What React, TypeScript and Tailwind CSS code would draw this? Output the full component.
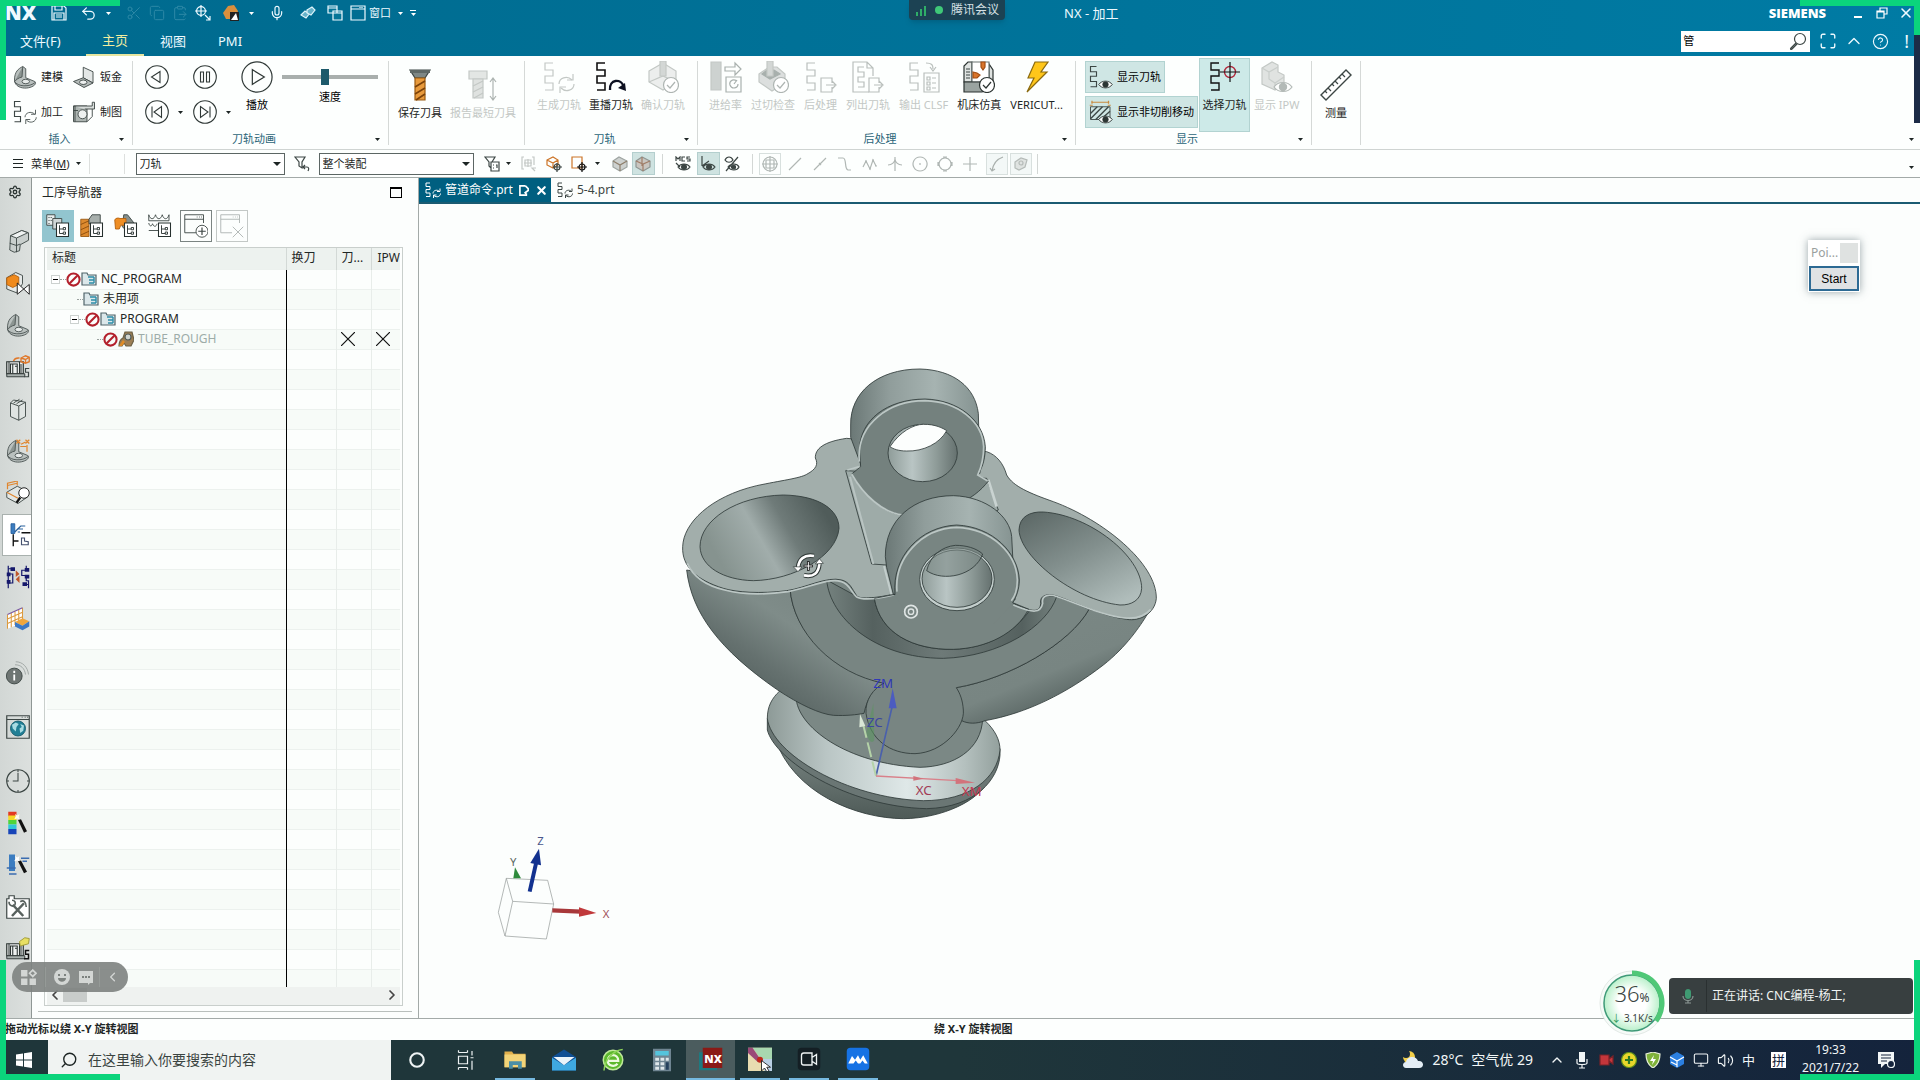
import { ReactNode } from "react";
import { Scissors, Copy, ClipboardPaste, Mic, Undo2, Search, X, ChevronUp, ChevronLeft, ChevronRight, CircleHelp, Settings, Maximize, Monitor, Volume2 } from "lucide-react";

const ink = "#3c4644";
const dim = "#c3c8c5";

type IconProps = { children: ReactNode; box?: number; className?: string };

function Svg({ children, box = 32, className = "size-8" }: IconProps) {
    return (
        <svg viewBox={`0 0 ${box} ${box}`} className={`shrink-0 ${className}`} fill="none" stroke={ink} strokeWidth="1.2" aria-hidden="true">
            {children}
        </svg>
    );
}

function Caret({ className = "text-[#1d2524]" }: { className?: string }) {
    return (
        <svg viewBox="0 0 5 3" className={`h-[3px] w-[5px] shrink-0 ${className}`} aria-hidden="true">
            <path d="M0 0h5L2.5 3z" fill="currentColor" />
        </svg>
    );
}

/* pieces shared by many tool path icons */
const snake = "M10 2H2v7h8v6H2v7h8v7H2";
const eye = (c: string) => (
    <g stroke={c} fill="#fdfefd">
        <path d="M13 26c4-6 14-6 18 0-4 6-14 6-18 0z" />
        <circle cx="22" cy="26" r="3.6" fill={c} />
    </g>
);
const check = (c: string) => (
    <g stroke={c}>
        <circle cx="24" cy="24" r="7.5" fill="#fff" />
        <path d="m20 24 3 3 5-6" fill="none" />
    </g>
);
const cycle = (c: string) => (
    <g stroke={c}>
        <path d="M16 23c0-6 8-9 13-4M31 23c0 6-8 9-13 4" />
        <path d="M30 13v6h-6M17 32v-6h6" />
    </g>
);
const bracket = (
    <g stroke="#4b5452">
        <path d="M2 20C2 9 7 5 13 2l4 3v12l12 5c2 2 1 4-2 6-5 3-13 4-19 1-4-2-6-5-6-9z" fill="#b9c0be" />
        <path d="M13 2l-1 14c-5 1-8 4-10 6" fill="#8c9592" />
        <ellipse cx="17" cy="22" rx="5" ry="3" fill="#e6eae9" />
        <path d="M2 22c4 7 20 8 28 1" />
    </g>
);
const treeBadge = (
    <g stroke="#26302e">
        <path d="M14 12h16v18H14z" fill="#fff" strokeWidth="1.4" />
        <path d="M18 15v11h5M18 20h5" />
        <path d="M23 18h3v3h-3zM23 24h3v3h-3z" />
    </g>
);
const machine = (
    <g stroke="#2b3331">
        <path d="M1 25V9h22v16z" fill="#eef1f0" strokeWidth="1.6" />
        <path d="M6 25V12h9v13M9 12v13M12 15h3M4 9v16M18 9v16M20 12v13" strokeWidth="1.4" />
        <path d="M1 25h24v4H1z" fill="#a9b1ae" />
    </g>
);

const I = {
    model: <Svg className="size-6">{bracket}</Svg>,
    sheet: (
        <Svg className="size-6">
            <path d="m15 3 13 6v15l-13-7z" fill="#e3e7e6" />
            <path d="M15 17 2 22l14 8 12-6z" fill="#b5bcba" />
            <ellipse cx="15" cy="23" rx="5" ry="3" fill="#eef1f0" />
        </Svg>
    ),
    cam: <Svg className="size-6"><path d={snake} strokeWidth="1.5" />{cycle("#4a5351")}</Svg>,
    draft: (
        <Svg className="size-6">
            <path d="M2 8h18v21H2z" fill="#aeb6b3" />
            <path d="M2 8h25V3h3v9H17" fill="#d7dcda" />
            <circle cx="14" cy="19" r="6" fill="#eef1f0" />
            <path d="M20 29l7-7V12" />
            <path d="M2 14h6M4 8v21" />
        </Svg>
    ),
    saveTool: (
        <Svg>
            <path d="M6 1h20l-5 8h-10z" fill="#7e8886" />
            <path d="M6 1h20v3H6z" fill="#5f6967" stroke="none" />
            <path d="M11 9h10v22H11z" fill="#e89a3c" stroke="#9a5a10" />
            <path d="m11 18 10-6M11 25l10-6M12 31l9-6" stroke="#7c4208" strokeWidth="1.6" />
        </Svg>
    ),
    shortTool: (
        <Svg>
            <g stroke={dim}>
                <path d="M2 2h18v8H2z" fill="#e3e6e4" />
                <path d="M6 10h10v19H6z" fill="#dfe2e0" />
                <path d="m6 17 10-5M6 23l10-5M7 29l9-5" />
                <path d="M26 10v20M23 13l3-4 3 4M23 27l3 4 3-4" stroke="#adb4b1" />
            </g>
        </Svg>
    ),
    gen: <Svg><path d={snake} stroke={dim} />{cycle(dim)}</Svg>,
    replay: (
        <Svg>
            <path d={snake} stroke="#111" strokeWidth="1.6" />
            <path d="M15 29c-1-11 11-12 14-3" stroke="#0c1020" strokeWidth="2.4" />
            <path d="M31 30l-8-3 7-5z" fill="#0c1020" stroke="none" />
        </Svg>
    ),
    confirm: (
        <Svg>
            <path d="M2 10 16 2l13 8v10l-13 9L2 21z" fill="#eceeed" stroke={dim} />
            <path d="M2 21l14-6 12 6M16 15v-4" stroke={dim} />
            <path d="M13 0h6v15h-6z" fill="#d3d7d5" stroke={dim} />
            {check("#aeb5b2")}
        </Svg>
    ),
    feed: (
        <Svg>
            <path d="M1 1h10v28H1z" fill="#cdd2d0" stroke={dim} />
            <path d="M15 6h10V2l6 6-6 6v-4H15z" stroke="#a9b1ae" />
            <path d="M16 16h15v15H16z" stroke="#a9b1ae" />
            <path d="M27 20c-5-3-8 1-7 4 2 5 8 3 8-1M24 23l3-4" stroke="#a9b1ae" />
        </Svg>
    ),
    gouge: (
        <Svg>
            <path d="M2 13 12 6h8l8 7v9l-13 8L2 21z" fill="#dcdfde" stroke={dim} />
            <path d="m5 13 8 5 10-5-6-4H10z" fill="#a8b0ad" stroke="#a8b0ad" />
            <path d="M10 0h6v15h-6z" fill="#d3d7d5" stroke={dim} />
            {check("#aeb5b2")}
        </Svg>
    ),
    post: (
        <Svg>
            <path d={snake} stroke="#b9bfbc" />
            <path d="M27 22v-5H16v14h11v-5M21 24h9M27 20l4 4-4 4" stroke="#b9bfbc" />
        </Svg>
    ),
    list: (
        <Svg>
            <path d="M17 31H1V1h14l6 6v8M15 1v6h6" stroke="#b9bfbc" />
            <path d="M12 6H6v5h6v5H6v5h6v5H6" stroke="#b9bfbc" />
            <path d="M27 22v-5H17v14h10v-5M22 24h8M27 20l4 4-4 4" stroke="#b9bfbc" />
        </Svg>
    ),
    clsf: (
        <Svg>
            <path d={snake} stroke="#b9bfbc" />
            <path d="M16 12h15v19H16zM19 16h3v3h-3zM19 21h3v3h-3zM19 26h3v3h-3zM24 17h4M24 22h4M24 27h4M18 2c6 0 7 2 7 6M22 6l3 4 3-4" stroke="#b9bfbc" />
        </Svg>
    ),
    sim: (
        <Svg>
            <path d="M1 21V5l4-4h4v20zM26 21V3l4 6v12z" fill="#dfe3e1" stroke="#2b3331" />
            <path d="M9 1h17v20H9z" fill="#fff" stroke="#6c7573" />
            <path d="M3 8h4M3 11h4M3 14h4M3 17h4" />
            <path d="M1 21h27v6l-9 4H1z" fill="#9aa3a0" stroke="#2b3331" />
            <path d="M18 1h4v5l-2 3-2-3zM10 11l4 1 3 2-3 3h-4z" fill="#d9742b" stroke="#a24d12" />
            {check("#2b3331")}
        </Svg>
    ),
    bolt: (
        <Svg>
            <path d="M14 1h13l-7 10h6L6 31l7-14H7z" fill="#ffc61a" stroke="#8a6a10" />
        </Svg>
    ),
    showPath: <Svg className="size-6"><path d={snake} strokeWidth="1.5" />{eye("#2c3634")}</Svg>,
    showMove: (
        <Svg className="size-6">
            <path d="M2 9h26v17H2z" />
            <path d="m2 18 9-9M2 25 18 9M9 26 26 9M18 24l10-9" strokeWidth="1.8" />
            <path d="M3 3h24M4 1v4M26 1v4M1 7h4M25 7h4" stroke="#c98a3e" strokeWidth="1.6" />
            {eye("#2c3634")}
        </Svg>
    ),
    pick: (
        <Svg>
            <path d={snake} stroke="#111" strokeWidth="1.4" />
            <circle cx="21" cy="11" r="5.5" stroke="#b0283c" strokeWidth="1.4" />
            <path d="M21 1v20M11 11h20" stroke="#111" strokeWidth="1.2" />
        </Svg>
    ),
    ipw: (
        <Svg>
            <path d="M1 7 11 1l6 3v7l6 3v8l-9 7L1 23z" fill="#e0e3e1" stroke={dim} />
            <path d="M1 7l7 4 9-5M8 11v7l6 4 9-6M14 22v6" stroke="#c9cecb" />
            {eye("#b3bab7")}
        </Svg>
    ),
    ruler: (
        <Svg>
            <path d="M1 26 26 1l5 5L6 31z" fill="#fff" strokeWidth="1.4" />
            <path d="m5 22 2 2M8 19l3 3M12 15l2 2M15 12l3 3M19 8l2 2M22 5l3 3" />
        </Svg>
    ),
};

function BigButton({ icon, label, off = false, low = false }: { icon: ReactNode; label: string; off?: boolean; low?: boolean }) {
    return (
        <button type="button" disabled={off} className={`flex flex-col items-center gap-1 whitespace-nowrap px-1 ${low ? "pt-2" : ""} ${off ? "text-[#c3c8c5]" : "text-[#1c2423]"}`}>
            {icon}
            <span className="text-[11px] leading-4">{label}</span>
        </button>
    );
}

function SmallButton({ icon, label }: { icon: ReactNode; label: string }) {
    return (
        <button type="button" className="flex h-8 items-center gap-1 whitespace-nowrap text-[11px] leading-4 text-[#1c2423]">
            {icon}
            {label}
        </button>
    );
}

function Group({ width, label, children }: { width: string; label?: string; children: ReactNode }) {
    return (
        <section className={`flex h-[84px] shrink-0 flex-col border-r border-[#d5d9d7] ${width}`}>
            <div className="h-[72px]">{children}</div>
            {label && (
                <div className="flex h-3 items-center text-[11px] leading-3 text-[#2a6478]">
                    <span className="flex-1 text-center">{label}</span>
                    <span className="mr-2"><Caret /></span>
                </div>
            )}
        </section>
    );
}

function RoundButton({ name, d, big = false }: { name: string; d: string; big?: boolean }) {
    return (
        <button type="button" aria-label={name} className={big ? "size-8" : "size-6"}>
            <svg viewBox="0 0 24 24" className="size-full" fill="none" stroke="#2f3836" strokeWidth={big ? "0.9" : "1.1"}>
                <circle cx="12" cy="12" r="11.3" />
                <path d={d} />
            </svg>
        </button>
    );
}

function TitleBar() {
    return (
        <header className="h-14 shrink-0 bg-linear-to-r from-[#006a8e] to-[#007ba4] text-[#eefaff]">
            <div className="flex h-[26px] items-center">
                <div className="flex flex-1 items-center">
                    <span className="ml-[5px] w-8 font-['Open_Sans','Noto_Sans',sans-serif] text-[20px] leading-6 font-extrabold">NX</span>
                    <div className="ml-[14px] flex items-center gap-[7px]">
                        <Svg box={16} className="size-4"><path d="M1 1h12l2 2v12H1zM4 1v4h7V1M3 15V8h10v7M5 10h6M5 12h6" stroke="#eefaff" /></Svg>
                        <Undo2 className="ml-[6px] size-[17px]" strokeWidth={1.8} />
                        <Caret className="ml-[2px] text-white" />
                        <Scissors className="ml-2 size-4 text-[#2c88a6]" strokeWidth={1.5} />
                        <Copy className="size-4 text-[#2c88a6]" strokeWidth={1.5} />
                        <ClipboardPaste className="size-4 text-[#2c88a6]" strokeWidth={1.5} />
                        <Svg box={16} className="size-4"><path d="M6 0v12M0 6h12M10 10l5 5M15 11v4h-4" stroke="#eefaff" /><circle cx="6" cy="6" r="4.4" stroke="#eefaff" /></Svg>
                        <Svg box={16} className="ml-[5px] size-4"><path d="m0 8 5-7 6-1 4 6-3 8H3z" fill="#d98f3d" stroke="none" /><path d="M7 7h9v9H7z" fill="#222" stroke="none" /><path d="m8 15 5-7 2 7z" fill="#fff" stroke="none" /></Svg>
                        <Caret className="ml-[3px] text-white" />
                        <Mic className="ml-2 size-4" strokeWidth={1.8} />
                        <Svg box={16} className="ml-2 size-4"><path d="m1 10 4-4 4 3-3 4zM7 5l5-3 3 3-4 5-4-2z" fill="#66b2c9" stroke="#dff4fa" /></Svg>
                        <Svg box={16} className="ml-1 size-4"><path d="M1 1h9v7H1zM1 3h9M6 6h9v9H6zM6 8h9" stroke="#eefaff" fill="#057597" /></Svg>
                        <Svg box={16} className="size-4"><path d="M1 1h14v14H1zM1 4h14M10 2v1M12 2v1" stroke="#eefaff" /></Svg>
                        <span className="-ml-1 text-[11px] leading-4">窗口</span>
                        <Caret className="text-white" />
                        <span className="flex flex-col items-center gap-[2px]"><i className="h-px w-[6px] bg-white" /><Caret className="text-white" /></span>
                    </div>
                </div>
                <div className="flex h-5 items-center gap-2 self-start rounded-b bg-[#1c4253] px-[6px] text-[12px] leading-4 text-[#d6e0e4] shadow-md">
                    <Svg box={12} className="size-3"><path d="M1 12V8h2v4zM5 12V5h2v7zM9 12V2h2v10z" fill="#2fae68" stroke="none" /></Svg>
                    <i className="size-2 rounded-full bg-[#3fc878]" />
                    腾讯会议
                </div>
                <div className="flex flex-1 items-center pr-[6px]">
                    <h1 className="mr-auto ml-[59px] text-[13px] leading-5">NX - 加工</h1>
                    <span className="mr-7 font-['Open_Sans','Noto_Sans',sans-serif] text-[13px] leading-5 font-extrabold text-white">SIEMENS</span>
                    <button type="button" aria-label="最小化" className="mt-2 mr-[14px] h-[2px] w-2 bg-white" />
                    <button type="button" aria-label="还原" className="mr-[10px]"><Svg box={12} className="size-3"><path d="M4 4V1h7v6H8M1 4h7v7H1zM1 5h7" stroke="#fff" /></Svg></button>
                    <button type="button" aria-label="关闭"><X className="size-4" strokeWidth={2.4} /></button>
                </div>
            </div>
            <nav className="flex h-[30px] items-center text-[13px] leading-5">
                <a href="#file" className="ml-5 w-[66px]">文件(F)</a>
                <a href="#home" className="flex h-[29px] w-[58px] flex-col items-center justify-end border-b-2 border-[#e6e6a0] pb-1 text-[#f2eda0]">主页</a>
                <a href="#view" className="ml-4 w-[58px]">视图</a>
                <a href="#pmi">PMI</a>
                <div className="ml-auto flex items-center pr-[11px]">
                    <div className="flex h-[21px] w-[129px] items-center bg-white">
                        <input aria-label="查找命令" defaultValue="管" className="w-[108px] px-[2px] text-[11px] leading-4 text-black outline-none" />
                        <Svg box={18} className="size-[18px]"><circle cx="11" cy="7" r="5.5" /><path d="m7 11-5 5c-1 1 0 2 1 1l5-5" /></Svg>
                    </div>
                    <Maximize className="ml-[9px] size-[18px]" strokeWidth={1.8} />
                    <ChevronUp className="ml-[7px] size-5" strokeWidth={1.6} />
                    <CircleHelp className="ml-2 size-[17px]" strokeWidth={1.6} />
                    <span className="ml-[15px] text-[18px] leading-5">!</span>
                </div>
            </nav>
        </header>
    );
}

function Ribbon() {
    return (
        <div className="flex h-[94px] shrink-0 items-start border-b border-[#cfd4d2] bg-[#fdfffe] pt-[5px]">
            <Group width="w-[133px]" label="插入">
                <div className="grid grid-cols-[59px_1fr] gap-y-[3px] pl-[13px]">
                    <SmallButton icon={I.model} label="建模" />
                    <SmallButton icon={I.sheet} label="钣金" />
                    <SmallButton icon={I.cam} label="加工" />
                    <SmallButton icon={I.draft} label="制图" />
                </div>
            </Group>
            <Group width="w-[256px]" label="刀轨动画">
                <div className="flex pl-3">
                    <div className="grid grid-cols-[48px_48px] gap-y-[3px]">
                        <div className="flex h-8 items-center"><RoundButton name="反向播放" d="M15 6.5v11L6.5 12z" /></div>
                        <div className="flex h-8 items-center"><RoundButton name="暂停" d="M7.5 7h3v10h-3zM13.5 7h3v10h-3z" /></div>
                        <div className="flex h-8 items-center gap-[9px]"><RoundButton name="上一步" d="M16.5 6.5v11L9 12zM7 6.5v11" /><Caret /></div>
                        <div className="flex h-8 items-center gap-[9px]"><RoundButton name="下一步" d="M7.5 6.5v11L15 12zM17 6.5v11" /><Caret /></div>
                    </div>
                    <div className="flex flex-col items-center gap-1 text-[11px] leading-4">
                        <RoundButton big name="播放" d="M8.5 6.500v11l9-5.500z" />
                        播放
                    </div>
                    <label className="ml-[9px] flex w-24 flex-col items-center gap-1 pt-2 text-[11px] leading-4">
                        <input type="range" defaultValue={44} className="h-4 w-24 appearance-none bg-transparent [&::-webkit-slider-runnable-track]:h-4 [&::-webkit-slider-runnable-track]:bg-[linear-gradient(#a9afad,#a9afad)] [&::-webkit-slider-runnable-track]:bg-[length:100%_4px] [&::-webkit-slider-runnable-track]:bg-center [&::-webkit-slider-runnable-track]:bg-no-repeat [&::-webkit-slider-thumb]:h-4 [&::-webkit-slider-thumb]:w-2 [&::-webkit-slider-thumb]:appearance-none [&::-webkit-slider-thumb]:bg-[#1d5a6b]" />
                        速度
                    </label>
                </div>
            </Group>
            <Group width="w-[136px]">
                <div className="flex pl-[5px]">
                    <BigButton low icon={I.saveTool} label="保存刀具" />
                    <BigButton low off icon={I.shortTool} label="报告最短刀具" />
                </div>
            </Group>
            <Group width="w-[173px]" label="刀轨">
                <div className="flex pl-2">
                    <BigButton off icon={I.gen} label="生成刀轨" />
                    <BigButton icon={I.replay} label="重播刀轨" />
                    <BigButton off icon={I.confirm} label="确认刀轨" />
                </div>
            </Group>
            <Group width="w-[378px]" label="后处理">
                <div className="flex gap-px pl-[7px]">
                    <BigButton off icon={I.feed} label="进给率" />
                    <BigButton off icon={I.gouge} label="过切检查" />
                    <BigButton off icon={I.post} label="后处理" />
                    <BigButton off icon={I.list} label="列出刀轨" />
                    <BigButton off icon={I.clsf} label="输出 CLSF" />
                    <BigButton icon={I.sim} label="机床仿真" />
                    <BigButton icon={I.bolt} label="VERICUT..." />
                </div>
            </Group>
            <Group width="w-[236px]" label="显示">
                <div className="flex pl-[9px]">
                    <div className="flex w-28 flex-col items-start gap-[3px]">
                        <button type="button" className="flex h-8 items-center gap-1 border border-[#b2d3d1] bg-[#cfe6e4] px-[3px] text-[11px] leading-4 whitespace-nowrap">{I.showPath}显示刀轨</button>
                        <button type="button" className="flex h-8 items-center gap-1 border border-[#b2d3d1] bg-[#cfe6e4] px-[3px] text-[11px] leading-4 whitespace-nowrap">{I.showMove}显示非切削移动</button>
                    </div>
                    <div className="-mt-[3px] ml-[2px] flex h-[74px] w-[51px] justify-center border border-[#b2d3d1] bg-[#cdeae8] pt-[2px]">
                        <BigButton icon={I.pick} label="选择刀轨" />
                    </div>
                    <BigButton off icon={I.ipw} label="显示 IPW" />
                </div>
            </Group>
            <Group width="w-[49px]">
                <div className="flex justify-center"><BigButton low icon={I.ruler} label="测量" /></div>
            </Group>
            <div className="flex h-[84px] flex-1 items-end justify-end pr-[6px] pb-1"><Caret /></div>
        </div>
    );
}

function Picker({ label, value, width }: { label: string; value: string; width: string }) {
    return (
        <div className={`relative flex h-[22px] shrink-0 items-center ${width}`}>
            <select aria-label={label} className="h-full w-full appearance-none border border-[#5c6664] bg-white px-[3px] text-[11px] leading-4">
                <option>{value}</option>
            </select>
            <svg viewBox="0 0 8 4" className="pointer-events-none absolute right-1 h-1 w-2"><path d="M0 0h8L4 4z" fill="#1d2524" /></svg>
        </div>
    );
}

const snaps = [
    "M2 14 13 3M12 4l2-2",
    "M2 14 14 2M7 7l2 2",
    "M1 2h5c4 0 1 11 5 12h3",
    "M1 11l3-6 4 8 3-9 3 6M3 5h2M7 13h2M10 4h2M13 10h2",
    "M8 1v14M1 9c4 0 7-3 7-6 0 3 3 6 7 6",
    "M8 1a7 7 0 1 0 .1 0zM8 7v2",
    "M8 2a6 6 0 1 0 .1 0zM6 1h4M6 15h4M1 6v4M15 6v4",
    "M8 1v14M1 8h14",
];

function SelectionBar() {
    return (
        <div className="flex h-7 shrink-0 items-center border-b border-[#a3aaa8] bg-[#fdfffe] text-[11px] leading-4 text-[#1c2423]">
            <button type="button" className="ml-[13px] flex items-center">
                <span className="mr-2 flex w-[10px] flex-col gap-[3px]"><i className="h-px bg-[#1c2423]" /><i className="h-px bg-[#1c2423]" /><i className="h-px bg-[#1c2423]" /></span>
                菜单(<u>M</u>)
                <span className="ml-[6px]"><Caret /></span>
            </button>
            <i className="ml-2 h-5 w-px bg-[#dde0de]" />
            <i className="ml-[34px] h-5 w-px bg-[#dde0de]" />
            <span className="w-[11px]" />
            <Picker label="类型过滤器" value="刀轨" width="w-[149px]" />
            <Svg box={16} className="mx-[9px] size-4"><path d="M1 1h10L8 6v6l-3-2V6zM9 11h4c2 0 2 2 1 4M11 9l-2 2 2 2" /></Svg>
            <Picker label="选择范围" value="整个装配" width="w-[155px]" />
            <Svg box={16} className="ml-[10px] size-4"><path d="M1 1h10L8 6H7v6L5 10V6zM7 6h8v9H7zM9 9h1M9 12h1M12 9h1v3" /></Svg>
            <span className="ml-[6px]"><Caret /></span>
            <Svg box={16} className="ml-[10px] size-4"><path d="M3 1H1v12h2M11 1h2v8M7 3v8M3 7h8M4 4h6v6H4zM14 15l-3-3h4" stroke={dim} /></Svg>
            <Svg box={16} className="ml-[9px] size-4"><path d="m1 4 6-3 5 3v5l-5 3-6-3zM1 4l6 3 5-3M7 7v5" stroke="#cc7427" /><path d="M11 7v9M7 11h9" /><circle cx="11" cy="11" r="3" /></Svg>
            <Svg box={16} className="ml-[9px] size-4"><path d="M1 1h10v11H1z" stroke="#cc7427" /><path d="M11 6v10M6 11h10" stroke="#111" /><circle cx="11" cy="11" r="3" stroke="#111" /></Svg>
            <span className="ml-2"><Caret /></span>
            <Svg box={16} className="ml-3 size-4"><path d="m1 5 6-4 8 4v6l-7 4-7-4z" fill="#cdd1cf" stroke="#9da4a1" /><path d="m1 5 7 4 7-4M8 9v6" stroke="#8e7f6c" /></Svg>
            <button type="button" aria-label="着色" className="ml-1 flex size-[23px] items-center justify-center border border-[#b4cfce] bg-[#cfe3e1]"><Svg box={16} className="size-4"><path d="m1 5 6-4 8 4v6l-7 4-7-4z" fill="#c9c6c0" stroke="#8f9693" /><path d="m1 5 7 3 7-3M8 8v7M7 1v9" stroke="#a07e68" /></Svg></button>
            <i className="ml-[7px] h-5 w-px bg-[#d3d7d5]" />
            <Svg box={16} className="ml-3 size-4"><path d="M1 5V1l2 2 2-2v4M10 1H7v4h3M15 1h-3v2h3v2h-3M1 7l4 4" /><path d="M3 11c3-4 9-4 12 0-3 4-9 4-12 0z" /><circle cx="9" cy="11" r="2.4" fill={ink} /></Svg>
            <button type="button" aria-label="显示坐标系" className="ml-[6px] flex size-[23px] items-center justify-center border border-[#b4cfce] bg-[#cfe3e1]"><Svg box={16} className="size-4"><path d="M2 0v10M2 10l7-5M3 11c3-4 9-4 12 0-3 4-9 4-12 0z" /><circle cx="9" cy="11" r="2.4" fill={ink} /></Svg></button>
            <Svg box={16} className="ml-1 size-4"><path d="M1 4c2-4 6-4 8 0-2 3-6 3-8 0zM4 11c3-4 9-4 11 0-2 4-8 4-11 0zM14 1 2 15" /><circle cx="9.5" cy="11" r="2" fill={ink} /></Svg>
            <i className="ml-3 h-5 w-px bg-[#d3d7d5]" />
            <span className="ml-[6px] flex size-[22px] items-center justify-center border border-[#d8e0de]"><Svg box={16} className="size-4"><path d="M8 0v16M0 8h16M4 4h8v8H4z" stroke="#b0b7b4" /><circle cx="8" cy="8" r="7" stroke="#b0b7b4" /></Svg></span>
            <span className="mr-2 ml-[6px] flex gap-[9px]">
                {snaps.map((d) => <Svg key={d} box={16} className="size-4"><path d={d} stroke="#b0b7b4" /></Svg>)}
            </span>
            <span className="flex size-[22px] items-center justify-center border border-[#d8e0de] bg-[#f3f8f7]"><Svg box={16} className="size-4"><path d="M14 1C8 3 4 8 3 15M1 12l2 3 3-2" stroke="#a9b0ad" /></Svg></span>
            <span className="ml-[2px] flex size-[22px] items-center justify-center border border-[#d8e0de] bg-[#f3f8f7]"><Svg box={16} className="size-4"><path d="m2 6 6-4 6 2-2 7-6 3-4-2z" fill="#dfe3e1" stroke="#b5bbb8" /><circle cx="8" cy="7" r="2" stroke="#b5bbb8" /></Svg></span>
            <i className="ml-[5px] h-5 w-px bg-[#d3d7d5]" />
            <span className="mt-[7px] mr-[6px] ml-auto"><Caret /></span>
        </div>
    );
}

const sideItems: { name: string; gap?: boolean; on?: boolean; art: ReactNode }[] = [
    { name: "装配导航器", art: <g><path d="m6 9 15-7 9 3v10l-11 6-1 8-7 2-6-3z" fill="#c9cfcd" /><path d="m6 9 8 3 15-7-8-3z" fill="#f0f3f2" /><path d="M14 12v19M5 19l9 3 5-2" /></g> },
    { name: "约束导航器", art: <g><path d="m1 9 12-7 9 4v11l-8 12-13-5z" fill="#e6e9e8" /><path d="m1 9 10-4 6 3v10l-8 4-8-4z" fill="#f08a1d" stroke="#b3600c" /><path d="M15 16v15l16-13v13z" fill="#fff" stroke="#111" /></g> },
    { name: "部件导航器", art: bracket },
    { name: "机床导航器", art: <g>{machine}<path d="M10 8c2-5 5-4 8-4M20 4l6-3 5 2v6l-5 2-6-2zM20 4l6 2 5-3M26 6v5" stroke="#e0782a" strokeWidth="1.8" /><path d="M31 18h-5v5h4v6h-6" strokeWidth="1.6" /></g> },
    { name: "重用库", art: <path d="m6 8 4-4 16 3v19l-9 5L6 26zM6 8l11 4v19M17 12l9-5M10 8l8-5M14 9l8-5" fill="#dfe4e2" /> },
    { name: "刀具库", art: <g>{bracket}<path d="m14 1 5 5M19 1l-5 5M20 7l6-3M26 1l5 5M31 1l-5 5M28 8v9M19 10h8" stroke="#e0862f" strokeWidth="1.6" /></g> },
    { name: "测量导航器", art: <g><path d="m1 15 14-8 14 7v7l-13 9-15-8z" fill="#e3e7e5" /><path d="M1 15l15 8M2 11V3l13-3v6M2 6l13-3" stroke="#e0862f" strokeWidth="1.6" /><circle cx="24" cy="16" r="7" fill="#fff" stroke="#111" /><path d="m19 22-5 7" stroke="#111" strokeWidth="3" /></g> },
    { name: "工序导航器", on: true, art: <g><path d="M4 1h5v13H4z" fill="#3b7cc0" stroke="#28609c" /><path d="M9 12 17 4h6M12 8h8M13 12h3" stroke="#28609c" strokeWidth="1.6" /><path d="M7 15v16M7 24h7M18 13h12" stroke="#111" strokeWidth="1.8" /><path d="M18 20h4v4l5 1v4h-9z" stroke="#44506e" strokeWidth="1.5" /></g> },
    { name: "特征列表", art: <g><path d="M3 1v30M9 5H3M3 12h6v12H3M27 1v6h-6v7h6v7h3v10M25 26h5" stroke="#15186b" strokeWidth="1.6" /><path d="M6 3h6v5H6zM1 10h5v5H1zM1 20h5v5H1zM25 4h6v5h-6zM25 13h6v5h-6zM22 23h6v5h-6z" fill="#15186b" stroke="none" /><path d="m13 7 5 5-5 4zM18 14v10l-5-5z" fill="#c0562b" stroke="none" /></g> },
    { name: "加工特征", art: <g><path d="M2 10 22 1v20L2 29z" fill="#fff" stroke="none" /><path d="M2 10v19M2 16l20-9M2 22l20-9M7 8v19M12 6v18M17 4v18M22 1v16" stroke="#dc9a3e" strokeWidth="1.4" /><path d="M2 10 22 1" stroke="#7a5aa0" strokeWidth="1.8" /><path d="m12 20 10-5 9 4-9 6z" fill="#f0a63c" stroke="none" /><path d="m12 20 10 5v6l-10-5zM22 25l9-6v7l-9 5z" fill="#3c78c4" stroke="none" /></g> },
    { name: "信息", gap: true, art: <g><circle cx="11" cy="20" r="10.5" fill="#6e7573" /><path d="M11 18v8M11 13v3" stroke="#fff" strokeWidth="2.4" /><path d="M12 5c8 0 13 5 14 13M13 1c9 0 16 7 17 17" stroke="#9da4a1" /></g> },
    { name: "网页浏览器", gap: true, art: <g><path d="M1 1h30v30H1zM1 6h30M21 3h1M25 3h1M28 3h1" strokeWidth="1.6" /><circle cx="16" cy="18" r="10" fill="#217f95" stroke="#155a6c" /><path d="m8 13 5-3 4 2-3 4-1 6-4-4zM19 12l5 2-1 7-4 3-1-6 3-2z" fill="#a8dbe2" stroke="none" /></g> },
    { name: "历史记录", gap: true, art: <g><circle cx="16" cy="16" r="15" strokeWidth="1.6" /><path d="M16 5v11H9M16 1v3M16 28v3M1 16h3M28 16h3" strokeWidth="1.4" /></g> },
    { name: "角色", art: <g stroke="none"><path d="M3 1h11v6H3z" fill="#e33a22" /><path d="M3 6h11v6H3z" fill="#f5d928" /><path d="M3 12h11v6H3z" fill="#4fd43a" /><path d="M3 18h11v6H3z" fill="#30c7d8" /><path d="M3 24h11v7H3z" fill="#1744b8" /><path d="m16 12 4-1 8 16-4 2z" fill="#111" /><path d="m12 4 3 2 3-2-1 4 1 3-3-1-4 1 2-4z" fill="#fffdf0" /></g> },
    { name: "加工向导", art: <g><path d="M4 2h8v22H4z" fill="#3b7cc0" stroke="none" /><path d="M1 20h12M20 7h11M22 11h6M4 28h10" stroke="#3b6cb0" strokeWidth="2" /><path d="m16 11 4-1 8 15-4 2z" fill="#111" stroke="none" /><path d="m12 4 3 2 3-2-1 4 1 3-3-1-4 1 2-4z" fill="#fff" stroke="none" /></g> },
    { name: "工具", art: <g><path d="M1 31V5h3V1h7v4h20v26z" fill="#fff" strokeWidth="1.6" /><path d="m8 28 16-17M9 13l14 15" stroke="#59625f" strokeWidth="3.4" /><path d="M19 9c4-3 8 0 8 7M4 9c0 6 6 7 8 4M8 7c4 0 5 3 4 6" stroke="#59625f" strokeWidth="2.2" /></g> },
    { name: "机床文件", art: <g>{machine}<path d="M31 18h-5v5h4v6h-6" strokeWidth="2" stroke="#111" /><path d="m18 6 7-5 6 1-1 7-11 3z" fill="#e8df63" stroke="#9c9632" /></g> },
];

function SideStrip() {
    return (
        <nav className="w-8 shrink-0 overflow-hidden border-r border-[#8f9795] bg-linear-to-r from-[#d2d7d5] to-[#dce0de]">
            <button type="button" aria-label="设置" className="mb-[15px] flex h-[27px] w-[30px] items-center justify-center">
                <Settings className="size-[14px] text-[#2c3533]" strokeWidth={2.2} />
            </button>
            {sideItems.map((s) => (
                <button key={s.name} type="button" aria-label={s.name} className={`flex h-[42px] w-full items-center justify-end pr-px ${s.gap ? "mt-3" : ""} ${s.on ? "ml-[2px] border border-r-0 border-[#a9b1ae] bg-white pr-[3px]" : ""}`}>
                    <Svg className="size-6">{s.art}</Svg>
                </button>
            ))}
        </nav>
    );
}

const noEntry = <Svg box={16} className="size-[15px]"><circle cx="8" cy="8" r="6.5" stroke="#b3202c" strokeWidth="2.2" /><path d="m12 4-8 8" stroke="#b3202c" strokeWidth="2.2" /></Svg>;
const folder = <Svg box={16} className="size-4"><path d="M1 14V2h5l1 2h8v10z" fill="#dbe7ea" stroke="#50646a" /><path d="M7 6h6M8 9h5M8 12h5M13 6v6" stroke="#2e8da8" strokeWidth="1.4" /></Svg>;
const rough = <Svg box={16} className="size-4"><path d="M1 15c0-4 2-7 4-8l2-6h7l2 8-3 6H8l-2-3-2 3z" fill="#9c7f55" stroke="#6b6045" /><circle cx="10" cy="6" r="3" fill="#cfd4cf" stroke="#4f5a57" /><path d="m1 15 4-6 2 2-3 4z" fill="#e08c25" stroke="none" /></Svg>;
const minus = <span className="flex size-[9px] shrink-0 items-center justify-center border border-[#ccd1cf] bg-white"><i className="h-px w-[5px] bg-black" /></span>;
const dash = <i className="w-[6px] shrink-0 border-t border-dotted border-[#9aa19f]" />;

const treeRows: { pad: string; open?: boolean; blocked?: boolean; icon: ReactNode; text: string; off?: boolean }[] = [
    { pad: "pl-1", open: true, blocked: true, icon: folder, text: "NC_PROGRAM" },
    { pad: "pl-[30px]", icon: folder, text: "未用项" },
    { pad: "pl-[23px]", open: true, blocked: true, icon: folder, text: "PROGRAM" },
    { pad: "pl-[50px]", blocked: true, icon: rough, text: "TUBE_ROUGH", off: true },
];

const cross = <Svg box={14} className="ml-1 size-[14px]"><path d="m0 0 14 14M14 0 0 14" stroke="#111" /></Svg>;

function Navigator() {
    const tools = [
        { name: "程序顺序视图", art: <g><path d="M1 1h11v14H1z" fill="#e6ecec" /><path d="M9 6h12v14H9z" fill="#cfd6d6" /><path d="M4 4v1M7 4v1M4 8v1M7 8v1M4 12v1" strokeWidth="1.8" /></g> },
        { name: "机床视图", art: <g><path d="M1 7h11v23H1z" fill="#dd8a2e" stroke="#9c5a12" /><path d="m1 14 11-5M1 21l11-5M1 28l11-5" stroke="#8a4c0c" /><path d="M16 1h11v12H12V7z" fill="#a7afac" /></g> },
        { name: "几何视图", art: <g><path d="M13 1h5l11 14-9 10-9-8z" fill="#87908d" /><path d="M1 8c1-3 5-3 7-2h8v9H9l-2 5H2z" fill="#ee8e25" stroke="#b4610d" /></g> },
        { name: "加工方法视图", art: <path d="M1 1c2 7 7 7 9 0 2 7 7 7 9 0 2 7 7 7 9 0v8H1zM1 12c1 5 4 5 5 1 2 5 5 4 6 0M1 22h13" /> },
    ];
    return (
        <section className="flex w-[387px] shrink-0 flex-col border-r border-[#a3aaa8] bg-[#fcfefd] text-[#1f2726]">
            <div className="flex h-[29px] items-center justify-between pr-4 pl-[10px]">
                <h2 className="text-[12px] leading-4">工序导航器</h2>
                <button type="button" aria-label="最大化" className="h-[11px] w-3 border border-t-2 border-black" />
            </div>
            <div className="mt-[3px] flex h-8 gap-[2px] pl-[10px]">
                {tools.map((t, i) => (
                    <button key={t.name} type="button" aria-label={t.name} className={`flex size-8 items-center justify-center ${i === 0 ? "bg-[#92c5cf]" : ""}`}>
                        <Svg className="size-6">{t.art}{treeBadge}</Svg>
                    </button>
                ))}
                <button type="button" aria-label="创建" className="ml-[2px] flex size-8 items-center justify-center border border-[#7b8482]"><Svg className="size-6"><path d="M16 25H1V1h25v11M1 7h25M17 4h1M20 4h1M23 4h1" /><circle cx="24" cy="23" r="8" fill="#fff" /><path d="M24 18v10M19 23h10" strokeWidth="1.6" /></Svg></button>
                <button type="button" disabled aria-label="删除" className="ml-[2px] flex size-8 items-center justify-center border border-[#c3c8c6]"><Svg className="size-6"><path d="M16 25H1V1h25v11M1 7h25M17 4h1M20 4h1M23 4h1M17 17l14 14M31 17 17 31" stroke="#adb3b1" /></Svg></button>
            </div>
            <div className="mt-[5px] mr-[15px] ml-3 flex min-h-0 flex-1 flex-col border border-[#c9cfcc] px-[2px]">
                <div className="min-h-0 flex-1 overflow-hidden">
                    <table className="w-full table-fixed border-collapse text-[12px] leading-4">
                        <colgroup><col className="w-[239px]" /><col className="w-[50px]" /><col className="w-[35px]" /><col /></colgroup>
                        <thead>
                            <tr className="h-[21px] bg-[#edf2ef] text-left">
                                <th className="border-r border-[#d3d9d6] p-0 pl-[5px] font-normal">标题</th>
                                <th className="border-r border-[#d3d9d6] p-0 pl-[5px] font-normal">换刀</th>
                                <th className="border-r border-[#d3d9d6] p-0 pl-[5px] font-normal">刀...</th>
                                <th className="p-0 pl-[6px] font-normal">IPW</th>
                            </tr>
                        </thead>
                        <tbody>
                            {Array.from({ length: 36 }, (_, i) => {
                                const r = treeRows[i];
                                return (
                                    <tr key={i} className="h-5 border-t border-[#ecf1ee] even:bg-[#f7fbf8]">
                                        <td className="border-r border-r-black p-0">
                                            {r && (
                                                <div className={`flex h-[19px] items-center ${r.pad}`}>
                                                    {r.open && minus}
                                                    {dash}
                                                    {r.blocked && noEntry}
                                                    {r.icon}
                                                    <span className={`ml-1 ${r.off ? "text-[#9daca8]" : ""}`}>{r.text}</span>
                                                </div>
                                            )}
                                        </td>
                                        <td className="border-r border-[#e8edea] p-0" />
                                        <td className="border-r border-[#e8edea] p-0">{i === 3 && cross}</td>
                                        <td className="p-0">{i === 3 && cross}</td>
                                    </tr>
                                );
                            })}
                        </tbody>
                    </table>
                </div>
                <div className="flex h-[18px] shrink-0 items-center bg-[#eff2f0] pb-[2px]">
                    <ChevronLeft className="size-4 text-[#444]" strokeWidth={2.6} />
                    <i className="h-[14px] w-6 bg-[#c8ccca]" />
                    <ChevronRight className="ml-auto size-4 text-[#444]" strokeWidth={2.6} />
                </div>
            </div>
            <div className="mx-[6px] mt-[5px] mb-[6px] h-px bg-[#b9bfbc]" />
        </section>
    );
}

function PipeModel() {
    const edge = { stroke: "#2f3a38", strokeWidth: 2.5 };
    return (
        <svg viewBox="0 0 1560 1440" className="absolute top-[172px] left-[241px] h-[480px] w-[520px]" fill="none" aria-label="管道模型">
            <defs>
                <linearGradient id="leftPipe" x1="0.15" y1="0.8" x2="0.7" y2="0.2"><stop offset="0" stopColor="#505c5a" /><stop offset="0.35" stopColor="#65716f" /><stop offset="0.7" stopColor="#7f8c89" /><stop offset="1" stopColor="#798683" /></linearGradient>
                <linearGradient id="rightPipe" x1="0.3" y1="0.2" x2="0.75" y2="0.85"><stop offset="0" stopColor="#7a8784" /><stop offset="0.5" stopColor="#788582" /><stop offset="1" stopColor="#4d5957" /></linearGradient>
                <linearGradient id="flange"><stop offset="0" stopColor="#8d9a97" /><stop offset="0.25" stopColor="#b9c5c4" /><stop offset="0.6" stopColor="#dfe8e8" /><stop offset="0.85" stopColor="#b4c0be" /><stop offset="1" stopColor="#93a09d" /></linearGradient>
                <linearGradient id="dome" x1="0" y1="0" x2="0" y2="1"><stop offset="0" stopColor="#7d8986" /><stop offset="1" stopColor="#4e5a57" /></linearGradient>
                <linearGradient id="cyl"><stop offset="0" stopColor="#6b7876" /><stop offset="0.3" stopColor="#909d9b" /><stop offset="0.65" stopColor="#a6b3b1" /><stop offset="1" stopColor="#849290" /></linearGradient>
                <linearGradient id="bore"><stop offset="0" stopColor="#8f9c99" /><stop offset="0.35" stopColor="#b9c5c4" /><stop offset="0.7" stopColor="#8e9b98" /><stop offset="1" stopColor="#65716f" /></linearGradient>
                <linearGradient id="holeL" x1="0.1" y1="0.65" x2="0.95" y2="0.35"><stop offset="0" stopColor="#86938f" /><stop offset="0.4" stopColor="#a1adab" /><stop offset="0.65" stopColor="#6f7b79" /><stop offset="1" stopColor="#505c5a" /></linearGradient>
                <linearGradient id="holeR" x1="0.1" y1="0" x2="0.8" y2="1"><stop offset="0" stopColor="#5d6967" /><stop offset="0.5" stopColor="#83908e" /><stop offset="1" stopColor="#b0bdbb" /></linearGradient>
                <linearGradient id="groove"><stop offset="0" stopColor="#74817e" /><stop offset="0.2" stopColor="#55615f" /><stop offset="0.5" stopColor="#6e7a78" /><stop offset="0.85" stopColor="#55615f" /><stop offset="1" stopColor="#74817e" /></linearGradient>
            </defs>
            {/* foot */}
            <path d="M345 1165C400 1330 590 1405 730 1406 850 1405 960 1350 985 1290z" fill="url(#dome)" {...edge} />
            <path d="M322 1105v35C345 1230 560 1370 800 1376c150-4 215-90 220-160v-20z" fill="#6a7674" {...edge} />
            <path d="M322 1105c0-35 13-60 38-83l615 90c30 28 45 58 45 88-8 85-90 152-230 152-230-7-455-140-468-247z" fill="url(#flange)" {...edge} />
            <path d="M408 1040c2 90 152 202 372 212 100-2 185-52 188-147V1040z" fill="#7b8885" {...edge} />
            {/* pipes and the plate between them */}
            <path d="M80 660c15 130 100 240 270 358 70 47 130 74 170 78 40 2 70-2 92-6 8-40 28-75 60-90C520 960 400 850 390 715z" fill="url(#leftPipe)" {...edge} />
            <path d="M889 1013c161-28 341-133 398-235l118 25 57-10c-22 35-62 97-132 152-110 85-230 145-355 167-25 10-50 10-70 0z" fill="url(#rightPipe)" {...edge} />
            <path d="M390 715c10 135 130 255 282 285-32 15-57 50-54 90 12 80 72 121 147 121 85-3 150-81 145-131-2-30-10-50-21-67 161-28 341-133 398-235l-97-40-690-55z" fill="#788582" {...edge} />
            <path d="M500 690c10 110 140 235 350 235 170-5 310-95 340-185l-40-5-40 45C1060 850 980 895 880 898 760 900 660 850 643 745l-60-10z" fill="url(#groove)" {...edge} />
            <path d="M643 745c17 105 117 155 237 153 100-3 190-48 227-123l-47-75-350-20z" fill="#788582" {...edge} />
            {/* top face */}
            <path d="M68 590C70 520 150 440 290 407c70-15 130-22 150-34 30-16 35-31 26-49-1-27 24-49 94-59l420 40c30 10 50 35 60 70 20 35 70 55 140 80 150 55 310 185 309 290-4 45-49 70-89 63-70-8-150-50-210-70-30-10-52 0-48 22-2 28-22 28-82 0L702 732c-42 10-102 18-112 5-15-22-20-40-45-47-45-12-105 23-165 32-80 10-150 5-190-7-80-25-125-65-122-125z" fill="#a2aeab" {...edge} />
            <path d="M82 640c18 42 62 68 112 80 50 13 110 16 190 5 60-10 120-43 160-30 25 7 28 30 45 45 20 12 70 5 112-5M1060 765c60 25 82 25 88-5-4-22 14-30 44-20 60 20 140 60 208 64 30 2 56-8 72-26" stroke="#bcc7c5" strokeWidth="5" />
            <path d="M120 590C120 510 230 438 370 435c110 2 167 45 167 100-7 85-137 155-257 157-90-2-158-42-160-102z" fill="url(#holeL)" {...edge} />
            <path d="M1077 540c1-40 33-56 73-54 140 9 295 134 295 229-2 35-30 51-65 50-140-15-300-145-303-225z" fill="url(#holeR)" {...edge} />
            {/* pocket */}
            <path d="m557 362 78 280 45 3 335-165-35-95z" fill="#9eaba8" {...edge} />
            <path d="m570 380 70 262" stroke="#b9c4c2" strokeWidth="6" />
            <path d="m985 390 25 80" stroke="#c9d3d1" strokeWidth="8" />
            {/* rear boss */}
            <path d="M572 225C570 130 650 57 780 57c100 3 165 53 175 133L960 370 605 350l-33-88z" fill="url(#cyl)" {...edge} />
            <path d="M598 300C600 210 680 148 795 147c100 3 175 63 181 143 0 30-6 60-23 85l32 18c-45 60-125 95-255 102-60-5-120-60-155-123l27-22z" fill="#74817e" {...edge} />
            <path d="M575 372c35 63 95 118 155 123M598 335C588 220 690 152 795 152c100 3 172 63 176 138 0 30-4 55-18 85l30 18M598 350l-36 10" stroke="#bcc7c5" strokeWidth="5" />
            <ellipse cx="788" cy="309" rx="104" ry="86" fill="url(#bore)" {...edge} />
            <path d="M690 290c30-45 70-67 100-67 35-1 60 12 70 19-20 38-70 63-120 61-25 0-40-6-50-13z" fill="#fcfefd" {...edge} />
            {/* front boss */}
            <path d="M676 620c-1-110 84-183 204-183 100 3 170 63 175 123l10 190-365-17-20-80z" fill="url(#cyl)" {...edge} />
            <path d="M706 738C695 620 780 530 890 525c110 5 185 85 188 165 0 25-8 50-20 72l-58 60H760z" fill="#788582" />
            <path d="M643 745l62-12C695 620 780 530 890 525c110 5 185 85 188 165 0 25-8 50-20 68l49 20" {...edge} />
            <path d="M711 725C702 625 785 535 890 532c108 5 180 80 182 158 0 25-8 50-18 62" stroke="#bcc7c5" strokeWidth="5" />
            <path d="m672 648 22 85" stroke="#c3cecc" strokeWidth="6" />
            <ellipse cx="891" cy="688" rx="112" ry="94" fill="#c3cecc" {...edge} />
            <ellipse cx="891" cy="686" rx="105" ry="86" fill="url(#bore)" {...edge} />
            <path d="M800 662c50 35 145 15 168-50-20-18-50-26-82-26-40 4-75 30-86 76z" fill="#7b8885" fillOpacity="0.6" {...edge} />
            {/* rotation centre */}
            <circle cx="753" cy="785" r="19" stroke="#dfe5e4" strokeWidth="5" />
            <circle cx="753" cy="785" r="8" stroke="#dfe5e4" strokeWidth="4" />
            {/* machine coordinate system */}
            <path d="M640 1060l-22 90c10 30 20 30 25 20z" fill="#5b9460" fillOpacity="0.6" />
            <path d="m648 1278 50-215" stroke="#4a60ac" strokeWidth="5" />
            <path d="m698 1015-12 60h24z" fill="#4c5cc0" />
            <path d="m648 1278-40-160" stroke="#b4d2a8" strokeWidth="6" strokeDasharray="45 14" />
            <path d="m600 1092-2 40 18-4z" fill="#d9e6d6" />
            <path d="m648 1278 245 14" stroke="#d9808a" strokeWidth="4" />
            <path d="m945 1298-58-14v18zM790 1286l-30-8v14z" fill="#d2737c" />
            <g fontSize="40" fontFamily="'Noto Sans', sans-serif">
                <text x="640" y="1014" fill="#3038b8">ZM</text>
                <text x="620" y="1131" fill="#3d45a0">ZC</text>
                <text x="767" y="1335" fill="#a23a55">XC</text>
                <text x="905" y="1338" fill="#c43850">XM</text>
            </g>
            {/* rotate cursor */}
            <g stroke="#2f3836" strokeWidth="14"><path d="M462 618c-30-5-46 10-48 36M432 676c30 6 44-8 46-34" /></g>
            <g stroke="#fff" strokeWidth="8"><path d="M462 618c-30-5-46 10-48 36M432 676c30 6 44-8 46-34" /></g>
            <path d="m400 650 26 1-12 14zM466 642l24-2-12-14z" fill="#fff" stroke="#2f3836" strokeWidth="2" />
            <path d="M445 634v28M431 648h28" stroke="#111" strokeWidth="8" />
            <path d="M445 636v24M433 648h24" stroke="#fff" strokeWidth="3" />
        </svg>
    );
}

function ViewTriad() {
    return (
        <svg viewBox="0 0 480 390" className="absolute bottom-[68px] left-[61px] h-[130px] w-40" fill="none" stroke="#8f9694" strokeWidth="2" aria-label="视图坐标">
            <path d="M79 175 203 181 221 252 98 244zM98 244 75 348M79 175 55 277 75 348 199 357 221 252" />
            <path d="m105 142 18 33H100z" fill="#2e8a3c" stroke="none" />
            <path d="m149 215 19-85" stroke="#12318f" strokeWidth="12" />
            <path d="m177 86 6 50-32-7z" fill="#12318f" stroke="none" />
            <path d="m217 271 85 4" stroke="#a8383a" strokeWidth="13" />
            <path d="m349 279-52-17v28z" fill="#c0393b" stroke="none" />
            <g fontSize="34" fontFamily="'Noto Sans', sans-serif" stroke="none">
                <text x="172" y="75" fill="#4a568c">Z</text>
                <text x="90" y="137" fill="#5d6b62">Y</text>
                <text x="368" y="294" fill="#a0505a">X</text>
            </g>
        </svg>
    );
}

function Viewport() {
    return (
        <main className="relative flex min-w-0 flex-1 flex-col overflow-hidden bg-[#fcfefd]">
            <div className="flex h-[26px] shrink-0 border-b-2 border-[#1b5b72] text-[12px] leading-5">
                <button type="button" className="flex w-[132px] items-center bg-[#005f80] pl-[6px] text-white">
                    <Svg className="size-4"><path d={snake} stroke="#fff" strokeWidth="2" /><g strokeWidth="2">{cycle("#fff")}</g></Svg>
                    <span className="ml-1">管道命令.prt</span>
                    <Svg box={12} className="ml-[6px] size-[11px]"><path d="M7 1H1v10h7V9M7 1l3 3v2L6 9" stroke="#fff" strokeWidth="1.8" /></Svg>
                    <X className="ml-[5px] size-[13px]" strokeWidth={4} />
                </button>
                <button type="button" className="flex items-center pl-[6px] text-[#3b4543]">
                    <Svg className="size-4"><path d={snake} strokeWidth="2" /><g strokeWidth="2">{cycle(ink)}</g></Svg>
                    <span className="ml-1">5-4.prt</span>
                </button>
            </div>
            <PipeModel />
            <ViewTriad />
            <div className="absolute top-[62px] right-[60px] w-[52px] bg-white px-px shadow-[0_0_8px_rgba(60,80,90,0.5)]">
                <div className="flex h-[26px] items-start justify-between pt-[3px] pr-px pl-[2px] text-[12px] leading-5 text-[#9aa09e]">
                    Poi...<i className="h-5 w-[18px] bg-[#dfe2e1]" />
                </div>
                <button type="button" className="mb-px block h-[25px] w-full border-2 border-[#2d6a94] bg-[#dfe2e4] font-['Liberation_Sans',sans-serif] text-[12px] leading-4 text-black">Start</button>
            </div>
        </main>
    );
}

const apps: { name: string; run?: boolean; on?: boolean; art: ReactNode }[] = [
    { name: "Cortana", art: <circle cx="16" cy="16" r="9" stroke="#eef3f4" strokeWidth="2.8" /> },
    { name: "任务视图", art: <path d="M6 6h12M6 26h12M6 11h12v10H6zM6 3v3M18 3v3M6 26v3M18 26v3M24 4v6M24 17v12M22 13h4" stroke="#eef3f4" strokeWidth="1.6" /> },
    { name: "文件资源管理器", run: true, art: <g stroke="none"><path d="M2 6h10l2 3h16v18H2z" fill="#e2b04c" /><path d="M2 10h28v17H2z" fill="#f3d478" /><path d="M8 19h17v10h-5v-5h-7v5H8z" fill="#4b8fa6" /></g> },
    { name: "邮件", art: <g stroke="none"><path d="M0 12 16 2l16 10v18H0z" fill="#0f4f94" /><path d="m0 13 16 10 16-10v17H0z" fill="#3fa9e0" /><path d="M2 12h28L16 23z" fill="#eaf4fa" /></g> },
    { name: "浏览器", art: <g><circle cx="16" cy="16" r="13" fill="#5cb82c" stroke="#bfe89a" strokeWidth="2" /><path d="M9 17h14c0-10-14-10-14 0 0 8 10 8 13 4" stroke="#eefae0" strokeWidth="3" /><path d="M4 30C5 16 16 3 29 2" stroke="#8ed45a" strokeWidth="2" /></g> },
    { name: "计算器", art: <g stroke="none"><path d="M4 1h24v30H4z" fill="#6f8592" /><path d="M7 4h18v6H7z" fill="#55c4dc" /><path d="M7 13h5v4H7zM14 13h5v4h-5zM21 13h4v4h-4zM7 19h5v4H7zM14 19h5v4h-5zM7 25h5v4H7zM14 25h5v4h-5z" fill="#dfe7ea" /><path d="M21 19h4v10h-4z" fill="#26415c" /></g> },
    { name: "NX", run: true, on: true, art: <g stroke="none"><path d="M0 7h24v24H0z" fill="#1d7a80" /><path d="M5 1h26v27H5z" fill="#8a1a16" /><text x="7" y="21" fontSize="15" fontWeight="800" fontFamily="'Open Sans', sans-serif" fill="#fff">NX</text></g> },
    { name: "画图", run: true, art: <g stroke="none"><path d="M0 1h32v31H0z" fill="#e8dcb0" /><path d="M6 1h26v15H17z" fill="#a8d8b0" /><path d="M0 1h6l11 16-4 3L0 8z" fill="#9a4a78" /><path d="M17 16h15v16H22z" fill="#b9cfe4" /><circle cx="16" cy="17" r="4" fill="#c0281c" /><path d="M18 18v14l4-4 3 5 3-1-3-5h5z" fill="#fff" stroke="#222" /></g> },
    { name: "录屏", run: true, art: <g><rect x="1" y="1" width="30" height="30" rx="5" fill="#141f24" stroke="none" /><path d="M6 11c0-2 1-3 3-3h11v16H9c-2 0-3-1-3-3zM20 14l6-4v13l-6-4" stroke="#eef3f4" strokeWidth="1.8" /></g> },
    { name: "腾讯会议", run: true, art: <g stroke="none"><rect x="1" y="1" width="30" height="30" rx="5" fill="#1672e4" /><path d="m3 22 5-10 4 5 4-6 3 6 4-6 6 11h-4l-3-4-3 4h-3l-3-4-3 4z" fill="#fff" /></g> },
];

function Taskbar() {
    return (
        <footer className="flex h-10 shrink-0 items-center bg-linear-to-r from-[#1f363a] from-50% to-[#14233c] text-[#f2f6f7]">
            <button type="button" aria-label="开始" className="flex h-full w-12 items-center justify-center">
                <Svg box={16} className="size-4"><path d="M0 2.500 7 1.400V7.500H0zM8 1.200 16 0v7.500H8zM0 8.500h7v6.100L0 13.500zM8 8.500h8V16l-8-1.200z" fill="#fff" stroke="none" /></Svg>
            </button>
            <label className="mr-px flex h-full w-[343px] items-center bg-[#f0f3f2] pl-3">
                <Search className="size-[18px] -scale-x-100 text-[#1c2423]" strokeWidth={1.8} />
                <input aria-label="搜索" placeholder="在这里输入你要搜索的内容" className="ml-[10px] w-72 text-[14px] leading-5 outline-none placeholder:text-[#3a4341]" />
            </label>
            {apps.map((a) => (
                <button key={a.name} type="button" aria-label={a.name} className={`flex h-full w-[49px] flex-col items-center justify-between ${a.on ? "bg-[#4b5c5e]" : ""}`}>
                    <span className="flex flex-1 items-center"><Svg className="size-6">{a.art}</Svg></span>
                    {a.run && <i className={`h-[2px] bg-[#76b9e0] ${a.on ? "w-full" : "w-10"}`} />}
                </button>
            ))}
            <div className="mr-[25px] ml-auto flex items-center text-[14px] leading-5">
                <Svg box={24} className="size-6"><circle cx="8" cy="9" r="6" fill="#f2cf4a" stroke="none" /><circle cx="5" cy="6" r="4" fill="#1a2b3b" stroke="none" /><path d="M5 20c-4 0-4-6 0-6 1-6 10-7 12-1 6-1 7 7 1 7z" fill="#e4edf5" stroke="none" /></Svg>
                <span className="ml-[7px]">28°C</span>
                <span className="mr-4 ml-2">空气优 29</span>
                <ChevronUp className="size-4" />
                <Svg box={18} className="ml-2 size-[18px]"><path d="M6 1h6v10H6z" fill="#f2f6f7" stroke="none" /><path d="M4 8v4c0 2 10 2 10 0V8M9 14v3M6 17h6" stroke="#f2f6f7" /></Svg>
                <Svg box={16} className="ml-2 size-4"><path d="M1 3h9v10H1zM10 7l4-3v8l-4-3z" fill="#c4363b" stroke="#7a2228" /></Svg>
                <Svg box={16} className="ml-[6px] size-4"><circle cx="8" cy="8" r="7.5" fill="#e9d62b" stroke="#5e8f1c" /><path d="M8 4v8M4 8h8" stroke="#2c7a22" strokeWidth="2.2" /></Svg>
                <Svg box={16} className="ml-2 size-4"><path d="m8 0 7 2c0 7-2 11-7 14C3 13 1 9 1 2z" fill="#7fb23a" stroke="#e6edd8" /><path d="m9 3-4 6h3l-1 4 4-6H8z" fill="#fff" stroke="none" /></Svg>
                <Svg box={16} className="ml-2 size-4"><path d="m8 0 7 4v8l-7 4-7-4V4z" fill="#2b7fe0" stroke="none" /><path d="m1 5 7 4 7-4M8 9v6M2 10l6 3" stroke="#fff" strokeWidth="1.2" /></Svg>
                <Monitor className="ml-2 size-4" strokeWidth={1.6} />
                <Volume2 className="ml-2 size-[17px]" strokeWidth={1.6} />
                <span className="mx-2 text-[13px]">中</span>
                <span className="mr-4 ml-2 bg-white px-px text-[13px] leading-4 text-[#14233c]">拼</span>
                <div className="flex flex-col items-center pb-[2px] text-[12px] leading-[18px]">
                    <time>19:33</time>
                    <time>2021/7/22</time>
                </div>
                <Svg box={18} className="ml-[18px] size-[18px]"><path d="M1 1h16v12H8l-4 4v-4H1z" fill="#f2f6f7" stroke="none" /><path d="M4 4h10M4 7h10M4 10h6" stroke="#14233c" /><circle cx="14" cy="13" r="3.5" stroke="#f2f6f7" fill="#14233c" /></Svg>
            </div>
        </footer>
    );
}

/* windows of the meeting client that float above everything */
function MeetingOverlay() {
    return (
        <div className="pointer-events-none">
            <i className="absolute top-0 left-0 h-[6px] w-30 bg-[#0bd47c]" />
            <i className="absolute top-0 left-0 h-30 w-[6px] bg-[#0bd47c]" />
            <i className="absolute top-0 right-0 h-[6px] w-30 bg-[#0bd47c]" />
            <i className="absolute top-0 right-0 h-[35px] w-[6px] bg-[#0bd47c]" />
            <i className="absolute top-[35px] right-0 h-22 w-[6px] bg-[#1c2b47]" />
            <i className="absolute bottom-0 left-0 h-[6px] w-30 bg-[#0bd47c]" />
            <i className="absolute bottom-0 left-0 h-30 w-[6px] bg-[#0bd47c]" />
            <i className="absolute right-0 bottom-0 h-[6px] w-30 bg-[#0bd47c]" />
            <i className="absolute right-0 bottom-0 h-30 w-[6px] bg-[#0bd47c]" />

            <div className="absolute bottom-[88px] left-3 flex h-[30px] w-29 items-center rounded-full bg-[#7d827f]/90 px-2 text-[#d3d6d4]">
                <Svg box={16} className="size-[17px]"><path d="M1 1h6v6H1zM1 9h6v6H1zM9 9h6v6H9z" fill="#d3d6d4" stroke="none" /><path d="m12 1 3 3-3 3-3-3z" stroke="#d3d6d4" strokeWidth="1.6" /></Svg>
                <i className="mx-2 h-5 w-px bg-[#959a97]" />
                <Svg box={16} className="size-4"><circle cx="8" cy="8" r="8" fill="#d3d6d4" stroke="none" /><path d="M4 9h8c0 5-8 5-8 0zM4 5h2v2H4zM10 5h2v2h-2z" fill="#7d827f" stroke="none" /></Svg>
                <Svg box={16} className="ml-2 size-4"><path d="M1 2h14v12h-3l-2 2v-2H1z" fill="#d3d6d4" stroke="none" /><path d="M4 7h2v2H4zM7 7h2v2H7zM10 7h2v2h-2z" fill="#7d827f" stroke="none" /></Svg>
                <i className="mx-[5px] h-5 w-px bg-[#959a97]" />
                <ChevronLeft className="size-4" />
            </div>

            <div className="absolute right-[255px] bottom-11 flex size-[66px] flex-col items-center justify-center text-[#3a4442]">
                <svg viewBox="0 0 66 66" className="absolute inset-0 size-full" fill="none">
                    <defs><radialGradient id="ball"><stop offset="0.5" stopColor="#fff" /><stop offset="1" stopColor="#b9f0ca" /></radialGradient></defs>
                    <circle cx="33" cy="33" r="32" fill="#f6fbf8" stroke="#e2e9e5" />
                    <circle cx="33" cy="33" r="28" fill="url(#ball)" stroke="#3f9a78" strokeWidth="1.5" />
                    <path d="M33 3a30 30 0 0 1 24 48" stroke="#4fc877" strokeWidth="5" />
                </svg>
                <span className="relative flex items-baseline text-[12px] leading-6"><b className="text-[22px] font-light">36</b>%</span>
                <span className="relative text-[10px] leading-4"><span className="text-[#2f9a5c]">↓</span> 3.1K/s</span>
            </div>

            <div className="absolute right-[7px] bottom-[66px] flex h-9 w-[244px] items-center rounded bg-[#383f40] text-[12px] leading-5 text-[#f2f5f4]">
                <span className="flex w-[37px] justify-center"><Svg box={16} className="size-4"><path d="M5 4c0-4 6-4 6 0v4c0 4-6 4-6 0z" fill="#3f9a72" stroke="none" /><path d="M3 8c0 6 10 6 10 0M8 12v3M5 15h6" stroke="#8b9794" /></Svg></span>
                <i className="mr-[5px] h-8 w-px bg-[#2a3031]" />
                正在讲话: CNC编程-杨工;
            </div>
        </div>
    );
}

export default function App() {
    return (
        <div className="relative flex h-screen w-full flex-col overflow-hidden bg-[#fcfefd] font-['Noto_Sans','Noto_Sans_CJK_SC',sans-serif]">
            <TitleBar />
            <Ribbon />
            <SelectionBar />
            <div className="flex min-h-0 flex-1">
                <SideStrip />
                <Navigator />
                <Viewport />
            </div>
            <div className="grid h-[22px] shrink-0 grid-cols-[934fr_986fr] items-center border-t border-[#a3aaa8] bg-[#fdfffe] pb-px text-[11px] leading-4 font-bold text-[#1f2726]">
                <span className="pl-[5px]">拖动光标以绕 X-Y 旋转视图</span>
                <span>绕 X-Y 旋转视图</span>
            </div>
            <Taskbar />
            <MeetingOverlay />
        </div>
    );
}
